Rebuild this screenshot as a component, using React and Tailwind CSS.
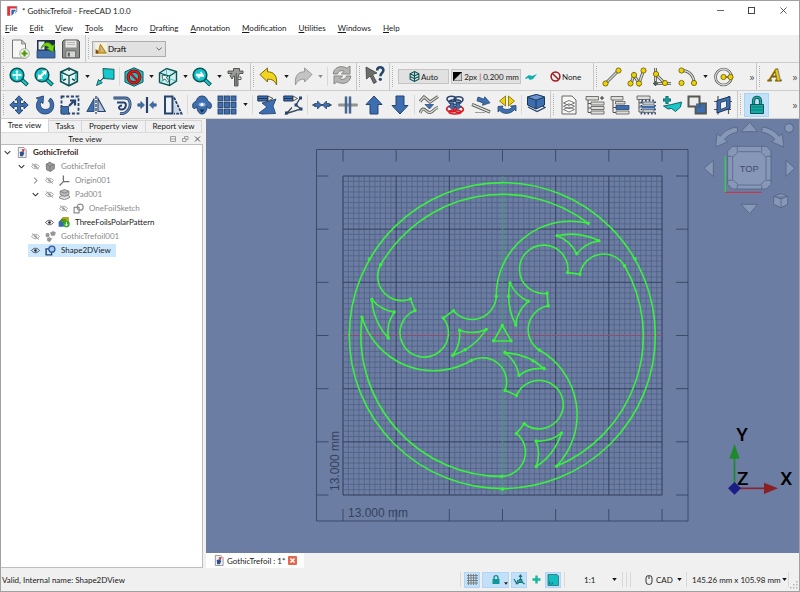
import { useState } from "react";

/* ---------- icon helpers ---------- */

const Icon = ({ size = "w-5 h-5", children }) => (
  <svg viewBox="0 0 20 20" className={`${size} block shrink-0`} fill="none" aria-hidden="true">
    {children}
  </svg>
);

const TEAL = "#16c8cc";
const TEAL_DARK = "#0b5557";
const BLUE = "#3d6fb0";
const BLUE_DARK = "#27446e";
const GREY_DARK = "#555753";
const YELLOW = "#edd400";
const YELLOW_DARK = "#6b5600";

const Knob = ({ x, y, r = 2.6 }) => (
  <circle cx={x} cy={y} r={r} fill={YELLOW} stroke={YELLOW_DARK} strokeWidth="0.8" />
);

const Tube = ({ d }) => (
  <>
    <path d={d} stroke={GREY_DARK} strokeWidth="3" />
    <path d={d} stroke="#d3d7cf" strokeWidth="1.4" />
  </>
);

const Magnifier = ({ children }) => (
  <Icon>
    <path d="M12 12l6.5 6" stroke={TEAL_DARK} strokeWidth="4" />
    <path d="M12.5 12.5l5.4 5" stroke={TEAL} strokeWidth="2.2" />
    <circle cx="8" cy="8" r="6.8" fill={TEAL} stroke={TEAL_DARK} strokeWidth="1.6" />
    {children}
  </Icon>
);

const icons = {
  newFile: (
    <Icon>
      <path d="M2.5 1h9l4 4v14h-13z" fill="#f6f6f5" stroke="#777" />
      <path d="M11.5 1v4h4z" fill="#c9c9c7" stroke="#777" strokeWidth="0.7" />
      <circle cx="14.5" cy="14.5" r="4.8" fill="#f4f7ef" stroke="#8a9a7c" strokeWidth="0.8" />
      <path d="M14.5 11.5v6M11.5 14.5h6" stroke="#4e9a06" strokeWidth="2.2" />
    </Icon>
  ),
  open: (
    <Icon>
      <path d="M1 1h18v12H1z" fill="#1f2f45" />
      <path d="M2.5 2.5h6v8h-6z" fill="#e8edf2" />
      <path d="M1 11.5h18V19H1z" fill="#3f6ea8" stroke="#27446e" strokeWidth="0.8" />
      <path d="M5 9.500C7 3 13 1.500 16 6.500l2.500-1-1.500 7.500-6.500-3.500 2.200-1C10.500 6.500 8 6.500 5 9.500z" fill="#73d216" stroke="#3a7a05" strokeWidth="0.7" />
    </Icon>
  ),
  save: (
    <Icon>
      <path d="M1.500 2.500L3 1h14l1.500 1.500V19h-17z" fill="#8c8e8b" stroke="#4f514e" />
      <path d="M4.500 1.500h11v7h-11z" fill="#e6e7e5" />
      <path d="M6 3.500h8M6 5.500h8" stroke="#aaa" strokeWidth="0.8" />
      <path d="M5 12h9.500v6.500H5z" fill="#d5d7d3" stroke="#5a5c59" strokeWidth="0.7" />
      <path d="M6.800 13.500h2v4h-2z" fill="#555753" />
    </Icon>
  ),
  zoomFit: (
    <Magnifier>
      <path d="M8 3l1.800 2.200H6.200zM8 13l1.800-2.200H6.200zM3 8l2.200-1.800v3.600zM13 8l-2.200-1.800v3.600z" fill="#fff" />
      <path d="M8 5v6M5 8h6" stroke="#fff" strokeWidth="1.3" />
    </Magnifier>
  ),
  zoomSel: (
    <Magnifier>
      <path d="M3.500 12.500l1-5.500 1.500 1.300 3-3L7.800 4l5-.8-.8 5-1.300-1.300-3 3L9 11.500z" fill="#fff" />
    </Magnifier>
  ),
  cube: (
    <Icon>
      <path d="M10 1.200l8.300 3.800v9.500L10 18.800 1.700 14.500V5z" fill="#e9f3f3" stroke={TEAL_DARK} strokeWidth="1.7" />
      <path d="M1.700 5L10 8.800 18.300 5M10 8.800v10M10 1v3M4 13.500l3-1.500M16 13.500L13 12" stroke={TEAL_DARK} strokeWidth="1.4" />
      <path d="M3.500 7.500v5.500M16.500 7.500v5.500" stroke={TEAL} strokeWidth="1" />
    </Icon>
  ),
  gotoLink: (
    <Icon>
      <path d="M8 1.500l11 .8v10l-10.500-.8z" fill={TEAL} stroke={TEAL_DARK} strokeWidth="0.9" />
      <path d="M9.500 10L5.500 14l1.800 1.800L1.500 18.500l2-6L5 14l4-4z" fill={TEAL} stroke={TEAL_DARK} strokeWidth="0.9" />
    </Icon>
  ),
  noDraw: (
    <Icon>
      <path d="M10 .8l9 4v10.200l-9 4.200-9-4.200V4.800z" fill={TEAL} stroke={TEAL_DARK} />
      <circle cx="10" cy="10" r="5.8" stroke="#7a0b0b" strokeWidth="3.4" />
      <circle cx="10" cy="10" r="5.8" stroke="#d81b1b" strokeWidth="2" />
      <path d="M6 6l8 8" stroke="#c41212" strokeWidth="2.4" />
    </Icon>
  ),
  boxSelect: (
    <Icon>
      <path d="M1.500 6l7-4.500 10 3v9.500l-7 4.500-10-3z" fill="#cfeeee" stroke={TEAL_DARK} strokeWidth="1.4" />
      <path d="M1.500 6l10 3 7-4.500M11.500 9v9.500" stroke={TEAL_DARK} strokeWidth="1.200" />
      <path d="M8.500 1.500V11l10 3M8.500 11l-7 4.500" stroke="#42b3b5" strokeWidth="0.8" />
      <path d="M4 8l6 1.200-1.800 1.300 3 3.500-1.500 1.300-3-3.500L5 13.500z" fill="#fff" stroke={TEAL_DARK} strokeWidth="0.8" />
    </Icon>
  ),
  zoomBox: (
    <Magnifier>
      <path d="M4 7.500h6.500L8.500 5M12 9H5.500l2 2.300" stroke="#fff" strokeWidth="1.4" />
    </Magnifier>
  ),
  caliper: (
    <Icon>
      <path d="M2 4h5.500V1.500h6V4h3.500v2.500h-3.500L12 10v9H8.500V9h-1L6 12 4 8.500 6 6.500H2z" fill="#9a9c98" stroke="#4a4c49" strokeWidth="0.9" />
      <path d="M10.200 6v12M12 10h3v2.500h-3" stroke="#4a4c49" strokeWidth="0.9" />
    </Icon>
  ),
  undo: (
    <Icon>
      <path d="M1 7.500L8.500 1v3.800c6.500 0 10 4 9 13.200-1.800-4.500-4.500-6-9-5.800V15z" fill="#f0d51f" stroke="#7d6608" />
    </Icon>
  ),
  redo: (
    <Icon>
      <path d="M19 7.500L11.500 1v3.800c-6.500 0-10 4-9 13.200 1.800-4.500 4.500-6 9-5.800V15z" fill="#c4c5c3" stroke="#979896" />
    </Icon>
  ),
  refresh: (
    <Icon>
      <path d="M1.200 9C1.500 2.500 9 -.5 15 3.300L18 1v8h-8.500l2.600-2.700C9.500 4.800 6 6 5.500 9z" fill="#b5b6b4" stroke="#858684" />
      <path d="M18.800 11c-.3 6.500-7.800 9.500-13.800 5.700L2 19v-8h8.500l-2.600 2.700c2.600 1.500 6.100.3 6.600-2.700z" fill="#b5b6b4" stroke="#858684" />
    </Icon>
  ),
  whatsThis: (
    <Icon>
      <path d="M1 2l11 6-4.500 1.500L11.500 17l-2.800 1.500L5 11l-3.500 3z" fill="#6b6d6a" stroke="#3f413e" strokeWidth="0.8" />
      <path d="M12.200 5.500c0-2 1.300-3.300 3-3.300s3.200 1.200 3.200 3c0 2.600-3 2.800-3 6" stroke={BLUE_DARK} strokeWidth="2.6" />
      <circle cx="15.300" cy="14.300" r="1.6" fill={BLUE_DARK} />
    </Icon>
  ),
  line: (
    <Icon>
      <Tube d="M3.500 16.500L16.500 3.500" />
      <Knob x={3.5} y={16.5} />
      <Knob x={16.5} y={3.5} />
    </Icon>
  ),
  wire: (
    <Icon>
      <Tube d="M4 16.500L7 8l5 8.500 4.500-13" />
      <Knob x={3.5} y={16.5} />
      <Knob x={7} y={8} />
      <Knob x={12} y={16.5} />
      <Knob x={16.5} y={3.5} />
    </Icon>
  ),
  fillet: (
    <Icon>
      <Tube d="M3.500 1v15.500H19" />
      <path d="M1 16.500h5M3.500 14v5" stroke={GREY_DARK} strokeWidth="1.6" />
      <Tube d="M4 7.500l8.500 8.500" />
      <Knob x={4} y={7} />
      <Knob x={13} y={16} />
    </Icon>
  ),
  arc: (
    <Icon>
      <Tube d="M3.500 3.500C11 3.500 16 8.500 16 16" />
      <Knob x={3.5} y={3.5} />
      <Knob x={3.5} y={16} />
      <Knob x={16} y={16} />
    </Icon>
  ),
  circle: (
    <Icon>
      <circle cx="9.500" cy="10" r="8" stroke={GREY_DARK} strokeWidth="2.6" />
      <circle cx="9.500" cy="10" r="8" stroke="#d3d7cf" strokeWidth="1.3" />
      <path d="M9.500 10h7" stroke={GREY_DARK} strokeWidth="1.500" />
      <Knob x={9.5} y={10} />
      <Knob x={16.5} y={10} />
    </Icon>
  ),
  textA: (
    <Icon>
      <text x="3" y="16" fontSize="17" fontWeight="bold" fontStyle="italic" fontFamily="DejaVu Serif, serif" fill="#e8c81a" stroke="#7d6608" strokeWidth="0.8">A</text>
    </Icon>
  ),
  move: (
    <Icon>
      <path d="M10 .8l4 4.200h-2.500v3.500H15V6l4.200 4-4.200 4v-2.500h-3.500V15H14l-4 4.200L6 15h2.500v-3.500H5V14L.8 10 5 6v2.500h3.500V5H6z" fill={BLUE} stroke={BLUE_DARK} strokeWidth="0.9" />
    </Icon>
  ),
  rotate: (
    <Icon>
      <path d="M8.500 1L8 8.500 6 7c-2 3.500.5 7.500 4.500 7.500 5 0 6.500-5.500 3-8.500l2-3c6 5 3.500 16-5.300 16C2 19 -1 10.500 3.500 4.800L1.200 3z" fill={BLUE} stroke={BLUE_DARK} strokeWidth="0.9" />
    </Icon>
  ),
  scale: (
    <Icon>
      <path d="M1.500 1.500h17v17h-17z" stroke={BLUE_DARK} strokeWidth="1.8" strokeDasharray="3 1.700" />
      <path d="M1 11.500h7.500V19H1z" fill={BLUE} stroke={BLUE_DARK} strokeWidth="0.9" />
      <path d="M9 11l4.500-4.500M10 5.500h5V10.500" stroke={BLUE_DARK} strokeWidth="2.2" />
    </Icon>
  ),
  mirror: (
    <Icon>
      <path d="M8 3.500v13H.8z" fill={BLUE} stroke={BLUE_DARK} strokeWidth="0.9" />
      <path d="M12 3.500v13h7.200z" fill="#b4c5dc" stroke={BLUE_DARK} strokeWidth="1.100" />
      <path d="M10 1v18" stroke={BLUE_DARK} strokeWidth="1.3" strokeDasharray="3 1" />
    </Icon>
  ),
  offset: (
    <Icon>
      <path d="M1.500 3h11.500c6 0 6 8 3.500 11.500C14.500 17.500 11 19 8 18.500" stroke={BLUE_DARK} strokeWidth="2.8" />
      <path d="M1.500 3h11.500c6 0 6 8 3.500 11.500C14.500 17.500 11 19 8 18.500" stroke="#6b8fc0" strokeWidth="1.200" />
      <path d="M5 7.500h7c3 0 2.500 6.500-2 7-4 .3-4-4 0-4" stroke={BLUE_DARK} strokeWidth="2" />
    </Icon>
  ),
  trim: (
    <Icon>
      <path d="M10 2v16" stroke={BLUE_DARK} strokeWidth="2.2" />
      <path d="M7.500 10L3.800 6.500v2.300H.8v2.400h3v2.300zM12.500 10l3.700-3.500v2.300h3v2.400h-3v2.300z" fill={BLUE} stroke={BLUE_DARK} strokeWidth="0.6" />
    </Icon>
  ),
  stretch: (
    <Icon>
      <path d="M2 1.500h7.500v17H2z" fill="#eef1f5" stroke={BLUE_DARK} strokeWidth="2" />
      <path d="M11 2.500L18.500 18.500H11" stroke={BLUE_DARK} strokeWidth="1.800" strokeDasharray="3 1" />
      <path d="M11 7l5.500 10.500H11z" fill="#c9d6e8" />
    </Icon>
  ),
  clone: (
    <Icon>
      <path d="M10 1c3 0 5 2 5.500 4.500l3.500 3c.8 3 .3 4.500-1 5-1 .3-2-.5-2.800-2-.2 4-2.200 7.500-5.200 7.500s-5-3.500-5.200-7.500c-.8 1.500-1.800 2.300-2.800 2-1.300-.5-1.800-2-1-5l3.500-3C5 3 7 1 10 1z" fill={BLUE} stroke={BLUE_DARK} />
      <ellipse cx="10" cy="9.500" rx="3.500" ry="2" fill="#8fb0dc" />
      <circle cx="10" cy="9.500" r="1.500" fill="#fff" />
      <path d="M7.500 14.500h5L10 17.500z" fill="#1a2c47" />
    </Icon>
  ),
  array: (
    <Icon>
      {[1, 7.5, 14].map((x) =>
        [1, 7.5, 14].map((y) => (
          <rect key={`${x}-${y}`} x={x} y={y} width="5" height="5" fill={BLUE} stroke={BLUE_DARK} strokeWidth="0.9" />
        ))
      )}
    </Icon>
  ),
  edit: (
    <Icon>
      <path d="M5 8l8-2 6-2-3 7 2.500 7.500L5 19l-3-1 8-6z" fill={BLUE} stroke={BLUE_DARK} strokeWidth="0.9" />
      <path d="M.8 1h10v5h-10z" fill={BLUE} stroke="#1c3457" strokeWidth="1" />
      <path d="M1 3.500h10" stroke="#1c3457" />
      <path d="M11 1l5 2.500L11 6z" fill="#f2f2f2" stroke="#333" strokeWidth="0.8" />
    </Icon>
  ),
  subElement: (
    <Icon>
      <path d="M17.500 2.500L13 10l5 4L3.500 18.500l5.500-6" stroke="#3b4a5e" strokeWidth="1.4" />
      <path d="M16 1.500h3v3h-3zM11.500 8.500h3v3h-3zM16.500 12.500h3v3h-3zM2 16.500h3v3H2z" fill={BLUE_DARK} />
      <path d="M.8 1h9v5h-9z" fill={BLUE} stroke="#1c3457" strokeWidth="1" />
      <path d="M1 3.500h9" stroke="#1c3457" />
      <path d="M10 1l4.500 2.500L10 6z" fill="#f2f2f2" stroke="#333" strokeWidth="0.8" />
    </Icon>
  ),
  join: (
    <Icon>
      <path d="M.5 10h19" stroke={GREY_DARK} strokeWidth="2" />
      <path d="M9.500 10L5.500 6v2.500h-3v3h3V14zM10.500 10l4-4v2.500h3v3h-3V14z" fill={BLUE} stroke={BLUE_DARK} strokeWidth="0.8" />
    </Icon>
  ),
  split: (
    <Icon>
      <path d="M.5 10h19" stroke={GREY_DARK} strokeWidth="2.6" />
      <path d="M1 10h18" stroke="#d3d7cf" strokeWidth="1" />
      <path d="M8 1.500v17M12 1.500v17" stroke={BLUE_DARK} strokeWidth="2.400" />
      <path d="M8 2v16M12 2v16" stroke="#7ba0d4" strokeWidth="0.8" />
    </Icon>
  ),
  upgrade: (
    <Icon>
      <path d="M10 1l8 8.500h-4V19H6V9.500H2z" fill={BLUE} stroke={BLUE_DARK} />
    </Icon>
  ),
  downgrade: (
    <Icon>
      <path d="M10 19l8-8.500h-4V1H6v9.500H2z" fill={BLUE} stroke={BLUE_DARK} />
    </Icon>
  ),
  bspline: (
    <Icon>
      <Tube d="M1 6.500l4-4.500 6 5L19 1.500" />
      <Tube d="M1 18c4-9 6 .5 10-.5s4-4.500 8-5" />
      <path d="M6 9.500h8.500L10.500 14z" fill={BLUE} stroke={BLUE_DARK} strokeWidth="0.7" />
    </Icon>
  ),
  toSketch: (
    <Icon>
      <ellipse cx="6.500" cy="14" rx="4.800" ry="2.800" stroke="#d81b24" strokeWidth="1.800" />
      <ellipse cx="13.500" cy="14.500" rx="4.800" ry="2.800" stroke="#d81b24" strokeWidth="1.800" />
      <ellipse cx="10" cy="17" rx="6" ry="2" stroke="#d81b24" strokeWidth="1.600" />
      <ellipse cx="6.500" cy="4" rx="4.500" ry="2.800" stroke={BLUE_DARK} strokeWidth="1.600" />
      <ellipse cx="13.500" cy="4.500" rx="4.500" ry="2.800" stroke={BLUE_DARK} strokeWidth="1.600" />
      <ellipse cx="10" cy="7" rx="6" ry="2.200" stroke={BLUE_DARK} strokeWidth="1.400" />
      <path d="M5.500 8h3v3h2L7 14.500 3.500 11h2zM11.500 8h3v3h2L13 14.500 9.500 11h2z" fill={BLUE} stroke={BLUE_DARK} strokeWidth="0.8" />
    </Icon>
  ),
  slope: (
    <Icon>
      <path d="M1 9.500l18 7.500" stroke={GREY_DARK} strokeWidth="3" />
      <path d="M1.500 9.700l17 7.100" stroke="#e2e4e0" strokeWidth="1.4" />
      <path d="M7 2l6 2.200.8-2.400L19 7.800l-7.500 2.500.6-2.400L6 5.800z" fill={BLUE} stroke={BLUE_DARK} strokeWidth="0.8" />
      <path d="M4 17.500h10" stroke="#8a8c88" strokeWidth="0.8" />
    </Icon>
  ),
  flip: (
    <Icon>
      <path d="M8.500 1v10L2.500 6zM11.500 1v10l6-5z" fill="#edd400" stroke="#7d6608" strokeWidth="0.8" />
      <path d="M1 11.500l5-.5-1 2c3 2 7 2 10-.5l-1.500-1.500 5.500-.5v5.500l-1.500-1.300C13 19.500 6 19.500 2.800 15.500L1 17z" fill={BLUE} stroke={BLUE_DARK} strokeWidth="0.8" />
    </Icon>
  ),
  shape2d: (
    <Icon>
      <path d="M2 14l9 4.500 8-4-3-2" fill="#e8edf4" stroke={BLUE_DARK} strokeWidth="1.200" />
      <path d="M1.500 4l9-2.500L18.500 4v8l-8.500 4-8.500-4z" fill={BLUE} stroke="#1c3457" />
      <path d="M1.500 4L10 7.200V16M10 7.200L18.500 4" stroke="#1c3457" strokeWidth="1" />
      <path d="M1.500 4l9-2.500 8 2.500L10 7.200z" fill="#6b95cf" stroke="#1c3457" strokeWidth="0.8" />
    </Icon>
  ),
  layer: (
    <Icon>
      <path d="M3 1h10l4 4v14H3z" fill="#f6f6f5" stroke="#666" />
      <path d="M4.500 14.500L10 12l5.500 2.500L10 17zM4.500 11.300L10 8.800l5.500 2.500L10 13.800zM4.500 8L10 5.500 15.500 8 10 10.500z" fill="#fff" stroke="#666" strokeWidth="0.9" />
    </Icon>
  ),
  layerNew: (
    <Icon>
      <path d="M3 4v13.500h4M3 8.500h4M3 13h4" stroke={GREY_DARK} />
      <path d="M1 1.500h12.500V5H1zM6 7h13v3H6zM6 11.500h13v3H6zM6 16h13v3H6z" fill="#dfe0dd" stroke={GREY_DARK} strokeWidth="0.8" />
      <path d="M17 1v4M15 3h4" stroke="#333" strokeWidth="1" />
    </Icon>
  ),
  layerAdd: (
    <Icon>
      <path d="M3 4v13.500h4M3 12.500h4" stroke={GREY_DARK} />
      <path d="M1 1.500h12V5H1zM5.500 6.500H15V9H5.500zM6 16h13v3H6z" fill="#dfe0dd" stroke={GREY_DARK} strokeWidth="0.8" />
      <path d="M6 10.500h13v4H6z" fill={BLUE} stroke={BLUE_DARK} strokeWidth="0.8" />
    </Icon>
  ),
  layerSelect: (
    <Icon>
      <path d="M3 4v13h4M3 8h4M3 12h4" stroke={GREY_DARK} />
      <path d="M1 1h13v3.500H1z" fill="#dfe0dd" stroke={GREY_DARK} strokeWidth="0.8" />
      <path d="M7 7h11v3H7zM7 14.500h11v3H7z" fill="#c3c8cf" stroke={GREY_DARK} strokeWidth="0.7" />
      <path d="M6 11h13v2.600H6z" fill={BLUE} />
      <path d="M5.500 5.500H19v13H5.500z" stroke={BLUE_DARK} strokeWidth="1.8" strokeDasharray="1.600 2" />
    </Icon>
  ),
  plane: (
    <Icon>
      <path d="M5 1v8M1 5h8" stroke={TEAL_DARK} strokeWidth="3" />
      <path d="M5 1.500v7M1.500 5h7" stroke="#12a5a8" strokeWidth="1.600" />
      <path d="M1.500 11l8-1.500 10-2.500-1 5-5 4.500-4-3-3.500.5z" fill={TEAL} stroke={TEAL_DARK} strokeWidth="0.9" />
    </Icon>
  ),
  overlap: (
    <Icon>
      <path d="M8.500 8.500h10.500v10H8.500z" fill={BLUE} stroke={GREY_DARK} strokeWidth="1.8" />
      <path d="M1.500 1.500h11v10h-11z" fill="#ececec" stroke={GREY_DARK} strokeWidth="2" />
      <path d="M9 8.500h3v3H9z" fill={BLUE} />
    </Icon>
  ),
  wp: (
    <Icon>
      <path d="M1 6.500h18M1 14.500h17M5 1v18.500M15.500 1v18" stroke={GREY_DARK} strokeWidth="1.200" />
      <path d="M4 5.500l13-4v12l-13 4.500z" fill={BLUE} stroke="#1c3457" />
      <path d="M7.500 7.500l6-1.800v6.500l-6 2.300z" fill="#eef1f5" stroke="#1c3457" strokeWidth="0.8" />
    </Icon>
  ),
  lock: (
    <Icon>
      <path d="M6.500 9.500V6c0-5 7-5 7 0v3.500" stroke={TEAL_DARK} strokeWidth="3.2" />
      <path d="M6.500 9.500V6c0-5 7-5 7 0v3.500" stroke="#19a8a5" strokeWidth="1.500" />
      <path d="M3.500 9.500h13V18.500h-13z" fill="#12aaa4" stroke={TEAL_DARK} />
      <path d="M4.500 12h11M4.500 15h11" stroke="#0b7f7c" strokeWidth="1.200" />
    </Icon>
  ),
};

/* ---------- toolbar pieces ---------- */

const Tool = ({ name, label }) => (
  <button type="button" aria-label={label || name} className="w-5 h-5 shrink-0">
    {icons[name]}
  </button>
);

const Caret = ({ light }) => (
  <button type="button" aria-label="More options" className="w-[6px] h-5 shrink-0 flex items-center justify-center">
    <svg viewBox="0 0 6 4" className="w-[5px] h-[3px]">
      <path d="M0 0h6L3 4z" fill={light ? "#8a8a8a" : "#1b1b1b"} />
    </svg>
  </button>
);

const Sep = () => <div className="w-px self-stretch my-1 bg-[#d9d9d9] shrink-0" />;
const Edge = () => <div className="w-px self-stretch bg-[#c9c9c9] shrink-0" />;
const Handle = () => (
  <div className="w-1 self-stretch my-[3px] pl-[2px] shrink-0">
    <div className="w-0 h-full border-l border-dotted border-[#b0b0b0]" />
  </div>
);
const More = () => (
  <button type="button" aria-label="Show more" className="font-['Open_Sans',sans-serif] text-[10px] text-[#555] w-2 shrink-0">»</button>
);

const toolbarRow = "flex items-center h-7 border-b border-[#cdcdcd] overflow-hidden";

const Toolbars = () => {
  const [workbench, setWorkbench] = useState("Draft");
  return (
    <div className="bg-[#f0f0f0] shrink-0">
      <div className={toolbarRow}>
        <Handle />
        <div className="flex w-[80px] justify-between pl-[5px] pr-1">
          <Tool name="newFile" label="New" />
          <Tool name="open" label="Open" />
          <Tool name="save" label="Save" />
        </div>
        <Edge />
        <Handle />
        <div className="relative ml-[2px] flex items-center w-[74px] h-4 bg-[#e1e1e1] border border-[#adadad]">
          <svg viewBox="0 0 20 20" className="w-[12px] h-[12px] ml-[2px] shrink-0" aria-hidden="true">
            <path d="M0 0h20v20H0z" fill="#f7f2dc" />
            <path d="M5 17L9 2l10 15z" fill="#e3a81c" stroke="#7c5a0b" />
            <path d="M1 10l4 3v5H1z" fill="#7a4a12" />
            <path d="M9 5l6 9-5 1z" fill="#b7b8b6" />
          </svg>
          <select
            aria-label="Workbench"
            value={workbench}
            onChange={(e) => setWorkbench(e.target.value)}
            className="appearance-none flex-1 min-w-0 bg-transparent pl-px text-[8px] leading-[14px] text-black outline-none"
          >
            <option>Draft</option>
          </select>
          <svg viewBox="0 0 8 5" className="absolute right-[3px] w-[6px] h-1" fill="none" aria-hidden="true">
            <path d="M.5.500L4 4 7.500.500" stroke="#444" />
          </svg>
        </div>
      </div>

      <div className={toolbarRow}>
        <Handle />
        <div className="flex gap-[5px] px-1">
          <Tool name="zoomFit" />
          <Tool name="zoomSel" />
          <Tool name="cube" />
          <Caret />
          <Tool name="gotoLink" />
        </div>
        <Sep />
        <div className="flex gap-1 px-1">
          <Tool name="noDraw" />
          <Caret />
          <Tool name="boxSelect" />
          <Caret />
          <Tool name="zoomBox" />
          <Caret />
          <Tool name="caliper" />
        </div>
        <Edge />
        <Handle />
        <div className="flex gap-1 px-1">
          <Tool name="undo" />
          <Caret />
          <Tool name="redo" />
          <Caret light />
        </div>
        <Sep />
        <div className="px-1"><Tool name="refresh" /></div>
        <Edge />
        <Handle />
        <div className="px-1"><Tool name="whatsThis" /></div>
        <Edge />
        <Handle />
        <div className="flex items-center pl-1 gap-[2px] w-[199px]">
          <button type="button" className="flex items-center justify-center w-[51px] h-[15px] bg-[#e1e1e1] border border-[#c4c4c4]">
            <svg viewBox="0 0 20 20" className="w-[11px] h-[11px] mr-px" fill="none" aria-hidden="true">
              <path d="M10 1l8 4v10l-8 4-8-4V5zM2 5l8 4 8-4M10 1v18M2 10l8 4 8-4" stroke={TEAL_DARK} strokeWidth="2" />
            </svg>
            Auto
          </button>
          <button type="button" className="flex items-center justify-center gap-[2px] w-[70px] h-[15px] bg-[#e1e1e1] border border-[#c4c4c4] whitespace-nowrap">
            <svg viewBox="0 0 10 10" className="w-[9px] h-[9px] shrink-0" aria-hidden="true">
              <path d="M0 0h10v10H0z" fill="#ccc" stroke="#333" />
              <path d="M0 0h10L0 10z" fill="#000" />
            </svg>
            <span>2px <span className="text-[#b03030]">|</span> 0.200 mm</span>
          </button>
          <button type="button" aria-label="Construction mode" className="ml-[2px] w-3 shrink-0">
            <svg viewBox="0 0 12 8" className="w-3 h-2">
              <path d="M0 5l4-3 3 1 5-2-4 5-3 1-2-2-2 1z" fill="#12aeb0" />
            </svg>
          </button>
          <button type="button" className="flex items-center gap-px ml-[11px]">
            <svg viewBox="0 0 10 10" className="w-[11px] h-[11px]" fill="none" aria-hidden="true">
              <circle cx="5" cy="5" r="4" stroke="#a01c1c" strokeWidth="1.4" />
              <path d="M2.200 2.200l5.600 5.600" stroke="#a01c1c" strokeWidth="1.4" />
            </svg>
            None
          </button>
        </div>
        <Edge />
        <Handle />
        <div className="flex justify-between pl-1 w-[136px]">
          <Tool name="line" />
          <Tool name="wire" />
          <Tool name="fillet" />
          <Tool name="arc" />
          <Caret />
          <Tool name="circle" />
        </div>
        <div className="flex-1" />
        <More />
        <Edge />
        <Handle />
        <div className="pl-[5px]"><Tool name="textA" label="Text" /></div>
        <div className="w-[5px]" />
        <More />
      </div>

      <div className={toolbarRow}>
        <Handle />
        <div className="flex justify-between px-1 w-[182px]">
          <Tool name="move" />
          <Tool name="rotate" />
          <Tool name="scale" />
          <Tool name="mirror" />
          <Tool name="offset" />
          <Tool name="trim" />
          <Tool name="stretch" />
        </div>
        <Sep />
        <div className="flex justify-between px-1 w-[64px]">
          <Tool name="clone" />
          <Tool name="array" />
          <Caret />
        </div>
        <Sep />
        <div className="flex justify-between px-1 w-[54px]">
          <Tool name="edit" />
          <Tool name="subElement" />
        </div>
        <Sep />
        <div className="flex justify-between px-1 w-[106px]">
          <Tool name="join" />
          <Tool name="split" />
          <Tool name="upgrade" />
          <Tool name="downgrade" />
        </div>
        <Sep />
        <div className="flex justify-between px-1 w-[106px]">
          <Tool name="bspline" />
          <Tool name="toSketch" />
          <Tool name="slope" />
          <Tool name="flip" />
        </div>
        <Sep />
        <div className="px-1"><Tool name="shape2d" /></div>
        <Edge />
        <Handle />
        <div className="flex justify-between px-1 w-[182px]">
          <Tool name="layer" />
          <Tool name="layerNew" />
          <Tool name="layerAdd" />
          <Tool name="layerSelect" />
          <Tool name="plane" />
          <Tool name="overlap" />
          <Tool name="wp" />
        </div>
        <Edge />
        <Handle />
        <button type="button" aria-label="Draft snap" className="flex items-center justify-center w-[25px] h-6 ml-[2px] bg-[#c2e0f7] border border-[#a8d3f5]">
          {icons.lock}
        </button>
        <div className="flex-1" />
        <More />
      </div>
    </div>
  );
};

/* ---------- model tree ---------- */

const Chevron = ({ open }) => (
  <svg viewBox="0 0 8 8" className="w-[7px] h-[7px]" fill="none">
    <path d={open ? "M.8 2.300L4 5.500l3.200-3.200" : "M2.500.8L5.700 4 2.500 7.200"} stroke={open ? "#333" : "#8a8a8a"} strokeWidth="1.2" />
  </svg>
);

const Eye = ({ hidden }) => (
  <svg viewBox="0 0 10 8" className="w-[9px] h-[7px]" fill="none">
    <path d="M.5 4C3 .6 7 .6 9.500 4 7 7.400 3 7.400.5 4z" stroke={hidden ? "#8a8a8a" : "#222"} strokeWidth="0.9" />
    <circle cx="5" cy="4" r="1.500" fill={hidden ? "#a5a5a5" : "#222"} />
    {hidden && <path d="M1 .5l8 7" stroke="#8a8a8a" strokeWidth="0.9" />}
  </svg>
);

const DocIcon = () => (
  <svg viewBox="0 0 10 12" className="w-[10px] h-[11px] shrink-0">
    <path d="M1 .5h6L9.500 3v8.500H1z" fill="#f1f1f1" stroke="#777" strokeWidth="0.8" />
    <path d="M4.500 2.500h3.500L6.500 6z" fill="#d92121" />
    <path d="M2.500 5.500l3-1 2 2L6 10H3z" fill="#2c4f96" />
  </svg>
);

const treeIcons = {
  doc: <DocIcon />,
  body: (
    <Icon size="w-[11px] h-[11px]">
      <path d="M2 6l7-4 4 3 4 1v8l-7 5-7-3z" fill="#9a9a9a" stroke="#6e6e6e" strokeWidth="1.500" />
      <path d="M2 6l7 4 8-4M9 10v8" stroke="#777" strokeWidth="1.500" />
    </Icon>
  ),
  origin: (
    <Icon size="w-[11px] h-[11px]">
      <path d="M8 1v11h11M8 12l-7 7" stroke="#707070" strokeWidth="2.4" />
    </Icon>
  ),
  pad: (
    <Icon size="w-[11px] h-[11px]">
      <path d="M1 14l9-4 9 3v3l-9 3.500-9-3z" fill="#ddd" stroke="#7a7a7a" strokeWidth="1.500" />
      <path d="M2 4l8-3 8 3v6l-8 3.500L2 10z" fill="#bbb" stroke="#7a7a7a" strokeWidth="1.500" />
      <path d="M2 4l8 3.500L18 4" stroke="#777" strokeWidth="1.500" />
    </Icon>
  ),
  sketch: (
    <Icon size="w-[11px] h-[11px]">
      <path d="M2 8h9v10H2z" stroke="#8d8d8d" strokeWidth="2.2" />
      <circle cx="13" cy="7.500" r="5.500" stroke="#8d8d8d" strokeWidth="2.2" />
    </Icon>
  ),
  polar: (
    <Icon size="w-3 h-3">
      <path d="M1 10l7-8h9v8l-8 8H1z" fill="#3867b8" />
      <path d="M5 5l5-3.500h8V11l-5-2H5z" fill="#b5a020" />
      <path d="M5 5h8v5H5z" fill="#4e9a06" />
      <circle cx="14" cy="13.500" r="5.500" fill="#2faa22" />
      <path d="M14 10v6M11.800 14l2.200 2.500 2.200-2.500" stroke="#fff" strokeWidth="1.6" />
    </Icon>
  ),
  clones: (
    <Icon size="w-[11px] h-[11px]">
      <path d="M10 3l5-2 4 2-2 5h-5zM2 5l4-1 2 3-2 4-4-1zM4 14l4-2 4 2-3 5-4-1z" fill="#9a9a9a" stroke="#777" />
    </Icon>
  ),
  shape: (
    <Icon size="w-[11px] h-[11px]">
      <path d="M2 7h10v11H2z" stroke="#27446e" strokeWidth="2.6" />
      <circle cx="12.500" cy="7.500" r="5.500" fill="#a9c8ee" stroke="#2d5a9b" strokeWidth="2.4" />
    </Icon>
  ),
};

const treeRows = [
  { level: 0, label: "GothicTrefoil", icon: "doc", open: true, root: true },
  { level: 1, label: "GothicTrefoil", icon: "body", open: true, hidden: true },
  { level: 2, label: "Origin001", icon: "origin", open: false, hidden: true },
  { level: 2, label: "Pad001", icon: "pad", open: true, hidden: true },
  { level: 3, label: "OneFoilSketch", icon: "sketch", hidden: true },
  { level: 2, label: "ThreeFoilsPolarPattern", icon: "polar" },
  { level: 1, label: "GothicTrefoil001", icon: "clones", hidden: true },
  { level: 1, label: "Shape2DView", icon: "shape", selected: true },
];

const indents = ["pl-0", "pl-[14px]", "pl-[28px]", "pl-[42px]"];

const TreeRow = ({ row }) => (
  <li className={`flex items-center h-[14px] ${indents[row.level]}`}>
    <span className="w-[13px] shrink-0 flex justify-center">
      {row.open !== undefined && <Chevron open={row.open} />}
    </span>
    <span className={`flex items-center h-[13px] pr-[5px] ${row.selected ? "bg-[#cce8ff]" : ""}`}>
      {!row.root && (
        <span className="w-[14px] pl-px shrink-0 flex justify-center">
          <Eye hidden={row.hidden} />
        </span>
      )}
      <span className="w-4 shrink-0 flex justify-center">{treeIcons[row.icon]}</span>
      <span className={`pl-[3px] whitespace-nowrap ${row.root ? "font-bold text-[#3b2320]" : row.hidden ? "text-[#8a8a8a]" : "text-[#222]"}`}>
        {row.label}
      </span>
    </span>
  </li>
);

const panelTabs = [
  { label: "Tree view", width: "w-12" },
  { label: "Tasks", width: "w-[33px]" },
  { label: "Property view", width: "w-16" },
  { label: "Report view", width: "w-14" },
];

const SidePanel = () => {
  const [active, setActive] = useState("Tree view");
  return (
    <aside className="w-[202px] shrink-0 flex flex-col bg-[#f0f0f0]">
      <div className="flex items-end h-[13px]" role="tablist">
        {panelTabs.map((tab) => (
          <button
            key={tab.label}
            type="button"
            role="tab"
            aria-selected={tab.label === active}
            onClick={() => setActive(tab.label)}
            className={`${tab.width} border-r border-[#d5d5d5] whitespace-nowrap ${
              tab.label === active ? "h-[13px] leading-[13px] bg-white" : "h-3 leading-[11px] bg-[#f0f0f0] border-t"
            }`}
          >
            {tab.label}
          </button>
        ))}
      </div>
      <div className="flex items-center h-3 border-t border-[#dcdcdc]">
        <span className="flex-1 text-center">Tree view</span>
        <svg viewBox="0 0 34 8" className="w-[34px] h-2" fill="none" stroke="#8a8a8a">
          <path d="M1.500 1.500h5v5h-5zM1.500 4h5" strokeWidth="0.8" />
          <path d="M13.500 3.500h3.500v3h-3.500zM15.500 3.500v-2h3.500v3h-2" strokeWidth="0.8" />
          <path d="M26 1.500l5 5M31 1.500l-5 5" stroke="#555" />
        </svg>
      </div>
      <ul className="flex-1 bg-white border border-[#bdbdbd] border-l-0">
        {treeRows.map((row, i) => (
          <TreeRow key={i} row={row} />
        ))}
      </ul>
    </aside>
  );
};

/* ---------- 3D view ---------- */

const CX = 502.3;
const CY = 335.6;
const GRID_X = 343;
const GRID_Y = 176;
const GRID_SIZE = 319;
const range = (n) => Array.from({ length: n + 1 }, (_, i) => i);

const lobe =
  "M588.300 223.300A141 141 0 0 0 380.700 264.700A24.200 24.200 0 0 0 410.500 299L415 310.500" +
  "A24.200 24.200 0 1 0 443.300 318L453.500 310.700A24.200 24.200 0 0 0 496.300 296.300A74.500 74.500 0 0 1 588.300 223.300Z";
const spandrels =
  "M557.300 235.700A36 36 0 0 1 576.700 253.700A36 36 0 0 1 598.700 240.700A62.200 62.200 0 0 0 557.300 235.700Z" +
  "M510 283A36 36 0 0 0 528.300 301.300A36 36 0 0 0 515.700 324.700A62.200 62.200 0 0 1 510 283Z";
const vertices = [
  [588.3, 223.3], [380.7, 264.7], [410.5, 299], [415, 310.5], [443.3, 318], [453.5, 310.7], [496.3, 296.3],
  [557.3, 235.7], [576.7, 253.7], [598.7, 240.7], [510, 283], [528.3, 301.3], [515.7, 324.7], [508.7, 296.3],
  [502.3, 325.5], [369.3, 259],
];

const Drawing = () => {
  const minor = GRID_SIZE / 60;
  const major = GRID_SIZE / 6;
  return (
    <svg viewBox="206 119 593 434" className="w-full h-full block" fill="none">
      <g stroke="#4f5e82" strokeWidth="0.7">
        {range(60).map((i) => (
          <path
            key={i}
            d={`M${GRID_X + i * minor} ${GRID_Y}v${GRID_SIZE}M${GRID_X} ${GRID_Y + i * minor}h${GRID_SIZE}`}
          />
        ))}
      </g>
      <g stroke="#333e5a" strokeWidth="0.8">
        {range(6).map((i) => (
          <path
            key={i}
            d={`M${GRID_X + i * major} ${GRID_Y}v${GRID_SIZE}M${GRID_X} ${GRID_Y + i * major}h${GRID_SIZE}`}
          />
        ))}
        <path d="M316.500 149.500h371.500v371.500h-371.500z" />
        {range(6).map((i) => {
          const x = GRID_X + i * major;
          const y = GRID_Y + i * major;
          return <path key={i} d={`M${x} 149.500v12M${x} 521v-12M316.500 ${y}h12M688 ${y}h-12`} />;
        })}
      </g>
      <g fill="#35415f" fontSize="12" fontFamily="Liberation Sans, sans-serif">
        <text x="348" y="517">13.000 mm</text>
        <text transform="translate(339 491) rotate(-90)">13.000 mm</text>
      </g>
      <path d={`M${GRID_X} 335.500h${GRID_SIZE}`} stroke="#8f4f6c" strokeWidth="1.2" />
      <path d={`M502.500 ${GRID_Y}v${GRID_SIZE}`} stroke="#449a74" strokeWidth="1.2" />
      <g stroke="#3af03f" strokeWidth="1.6">
        <circle cx={CX} cy={CY} r="153" />
        <path d="M502.300 325.500L511 341H493.600Z" />
        {[0, 120, 240].map((angle) => (
          <g key={angle} transform={`rotate(${angle} ${CX} ${CY})`}>
            <path d={lobe} />
            <path d={spandrels} />
            {vertices.map(([x, y]) => (
              <circle key={`${x}-${y}`} cx={x} cy={y} r="1.7" fill="#3af03f" stroke="none" />
            ))}
          </g>
        ))}
      </g>
    </svg>
  );
};

const NavCube = () => (
  <svg viewBox="24 6 282 294" className="absolute top-0 right-[2px] w-[94px] h-[98px]" fill="#8797b8" stroke="#4d5b7b" strokeWidth="2">
    <path d="M138 44L164 16l24 28zM138 262h50l-24 28zM55 130v48l-28-24zM273 130v48l26-24z" />
    <path d="M126 30c-22 3-38 12-50 28l-10-8-4 40 36-16-10-7c10-12 22-18 40-22z" />
    <path d="M202 30c22 3 38 12 50 28l10-8 4 40-36-16 10-7c-10-12-22-18-40-22z" />
    <circle cx="282" cy="33" r="13" />
    <path d="M112 88h102l14 14v100l-14 14H112l-14-14V102z" />
    <path d="M130 104h66l17 17v66l-17 17h-66l-17-17v-66z" />
    <path d="M98 118h15M213 118h15M98 190h15M213 190h15M127 88v16M200 88v16M127 204v12M200 204v12" />
    <path d="M236 238l22-8 20 8v24l-20 10-22-10zM236 238l22 8 20-8M258 246v26" />
    <text x="134" y="164" fontSize="28" fontFamily="Liberation Sans, sans-serif" fill="#3f4c6b" stroke="none">TOP</text>
    <path d="M91 118v108" stroke="#35d04a" strokeWidth="4" />
    <path d="M91 226h108" stroke="#c23a4c" strokeWidth="4" />
  </svg>
);

const AxisCross = () => (
  <svg viewBox="78 40 216 216" className="absolute right-px bottom-[57px] w-[72px] h-[72px]">
    <path d="M103.500 228V140" stroke="#1d8a2c" strokeWidth="5" />
    <path d="M88 144l15.500-44L119 144z" fill="#1d8a2c" />
    <path d="M110 233h85" stroke="#8b2331" strokeWidth="5" />
    <path d="M192 216v34l42-17z" fill="#8b1f24" />
    <path d="M84 233l19.500-19 19.500 19-19.500 19z" fill="#1c1d84" />
    <g fontSize="57" fontFamily="Roboto, sans-serif" fontWeight="500" fill="#000">
      <text x="109" y="91">Y</text>
      <text x="111" y="223">Z</text>
      <text x="241" y="223">X</text>
    </g>
  </svg>
);

const DocumentTab = () => (
  <div className="flex h-[15px] bg-[#f0f0f0]">
    <div className="flex items-center gap-[3px] w-[98px] pl-2 bg-white">
      <DocIcon />
      <span className="whitespace-nowrap">GothicTrefoil : 1*</span>
      <button type="button" aria-label="Close document" className="w-[9px] h-[9px] bg-[#e2694e] rounded-[1px]">
        <svg viewBox="0 0 9 9" className="block w-[9px] h-[9px]">
          <path d="M2.500 2.500l4 4M6.500 2.500l-4 4" stroke="#fff" strokeWidth="1.500" />
        </svg>
      </button>
    </div>
  </div>
);

/* ---------- status bar ---------- */

const statusToggle = "h-4 flex items-center justify-center bg-[#c2e0f7] border border-[#b0d6f5]";

const StatusBar = () => (
  <footer className="flex items-center h-[23px] pl-px">
    <span className="flex-1">Valid, Internal name: Shape2DView</span>
    <Sep />
    <div className="flex items-center gap-[2px] px-[3px]">
      <button type="button" aria-label="Grid" className={`${statusToggle} w-4`}>
        <svg viewBox="0 0 11 11" className="w-[11px] h-[11px]">
          <path d="M0 1.500h11M0 4h11M0 6.500h11M0 9h11M1.500 0v11M4 0v11M6.500 0v11M9 0v11" stroke="#777" strokeWidth="0.9" />
        </svg>
      </button>
      <button type="button" aria-label="Snap lock" className={`${statusToggle} w-[27px] gap-[3px] pl-2`}>
        <svg viewBox="0 0 20 20" className="w-[10px] h-[11px] shrink-0" fill="none">
          <path d="M6 9V6c0-5 8-5 8 0v3" stroke="#0e8a86" strokeWidth="2.6" />
          <path d="M3 9h14v10H3z" fill="#0f9994" />
        </svg>
        <svg viewBox="0 0 6 4" className="w-1 h-[3px] mt-2 shrink-0"><path d="M0 0h6L3 4z" fill="#222" /></svg>
      </button>
      <button type="button" aria-label="Snap dimensions" className={`${statusToggle} w-4`}>
        <svg viewBox="0 0 12 12" className="w-3 h-3" fill="none" stroke="#15777a">
          <path d="M7.500 1v6l4 3M7.500 7L4 10M1 5l2.500 4.500L5 6M6 3l1.500-2L9 3" strokeWidth="1.2" />
          <path d="M6 5.500h3v3H6z" fill="#16a0a2" />
        </svg>
      </button>
      <button type="button" aria-label="Ortho" className="h-4 w-[14px] flex items-center justify-center">
        <svg viewBox="0 0 9 9" className="w-[9px] h-[9px]"><path d="M4.500.5v8M.5 4.500h8" stroke="#18b59f" strokeWidth="2.4" /></svg>
      </button>
      <button type="button" aria-label="Working plane" className={`${statusToggle} w-4`}>
        <svg viewBox="0 0 12 12" className="w-3 h-3">
          <path d="M1 .5h9l1.500 1.500v9.500H1z" fill="#16bcc0" stroke={TEAL_DARK} strokeWidth="0.6" />
          <path d="M2.500 7v3h3V8" stroke="#0f7c86" fill="none" strokeWidth="0.8" />
        </svg>
      </button>
    </div>
    <Sep />
    <button type="button" className="flex items-center justify-between w-[57px] pl-[19px] pr-[5px]">
      1:1
      <svg viewBox="0 0 6 4" className="w-[5px] h-[3px]"><path d="M0 0h6L3 4z" fill="#111" /></svg>
    </button>
    <div className="flex self-stretch gap-[3px]">
      <Sep />
      <Sep />
      <Sep />
    </div>
    <button type="button" className="flex items-center w-[55px] pl-[14px]">
      <svg viewBox="0 0 8 10" className="w-2 h-[10px] mr-[3px]" fill="none" stroke="#333">
        <rect x="1" y="0.6" width="6" height="8.8" rx="2.5" />
        <path d="M4 1v3" />
      </svg>
      CAD
      <svg viewBox="0 0 6 4" className="w-[5px] h-[3px] ml-auto mr-1"><path d="M0 0h6L3 4z" fill="#111" /></svg>
    </button>
    <Sep />
    <button type="button" className="flex items-center gap-px w-[101px] pl-[5px] whitespace-nowrap">
      145.26 mm x 105.98 mm
      <svg viewBox="0 0 6 4" className="w-[5px] h-[3px] shrink-0"><path d="M0 0h6L3 4z" fill="#111" /></svg>
    </button>
    <Sep />
    <svg viewBox="2 2 10 10" className="w-[10px] h-[10px] self-end mb-px" fill="#b5b5b5">
      <path d="M9 9h1.500v1.500H9zM9 6h1.500v1.500H9zM9 3h1.500v1.500H9zM6 9h1.500v1.500H6zM6 6h1.500v1.500H6zM3 9h1.500v1.500H3z" />
    </svg>
  </footer>
);

/* ---------- window ---------- */

const menus = ["File", "Edit", "View", "Tools", "Macro", "Drafting", "Annotation", "Modification", "Utilities", "Windows", "Help"];

const TitleBar = () => (
  <header className="flex items-center h-[19px] pl-[5px] bg-white">
    <svg viewBox="0 0 20 20" className="w-3 h-3 shrink-0" aria-hidden="true">
      <path d="M2 2h16v4H7v12H2z" fill="#e0343c" />
      <path d="M9 8h7v3h-3v3l-4 4z" fill="#2f62ad" />
      <path d="M18 2v8l-3 4" stroke="#5b87c7" strokeWidth="1.500" fill="none" />
    </svg>
    <h1 className="flex-1 pl-1 text-[8px]">* GothicTrefoil - FreeCAD 1.0.0</h1>
    <div className="flex">
      <button type="button" aria-label="Minimize" className="w-8 h-4 flex items-center justify-center">
        <span className="w-[7px] h-px bg-[#666]" />
      </button>
      <button type="button" aria-label="Maximize" className="w-[31px] h-4 flex items-center justify-center">
        <span className="w-[7px] h-[7px] border border-[#444]" />
      </button>
      <button type="button" aria-label="Close" className="w-8 h-4 flex items-center justify-center">
        <svg viewBox="0 0 8 8" className="w-[7px] h-[7px]"><path d="M.5.500l7 7M7.500.500l-7 7" stroke="#333" strokeWidth="0.9" /></svg>
      </button>
    </div>
  </header>
);

export default function App() {
  return (
    <div className="flex flex-col h-screen w-full border border-[#a0a0a0] bg-[#f0f0f0] font-[Lato,sans-serif] text-[8px] leading-3 text-[#1a1a1a] overflow-hidden">
      <TitleBar />
      <nav className="flex items-center gap-3 h-[15px] pl-1 bg-white shrink-0">
        {menus.map((name) => (
          <button key={name} type="button">
            <span className="underline">{name[0]}</span>{name.slice(1)}
          </button>
        ))}
      </nav>
      <Toolbars />
      <div className="flex flex-1 min-h-0">
        <SidePanel />
        <main className="flex-1 min-w-0 ml-[3px] flex flex-col">
          <div className="relative flex-1 min-h-0 bg-[#6b7da2]">
            <Drawing />
            <NavCube />
            <AxisCross />
          </div>
          <DocumentTab />
        </main>
      </div>
      <StatusBar />
    </div>
  );
}
